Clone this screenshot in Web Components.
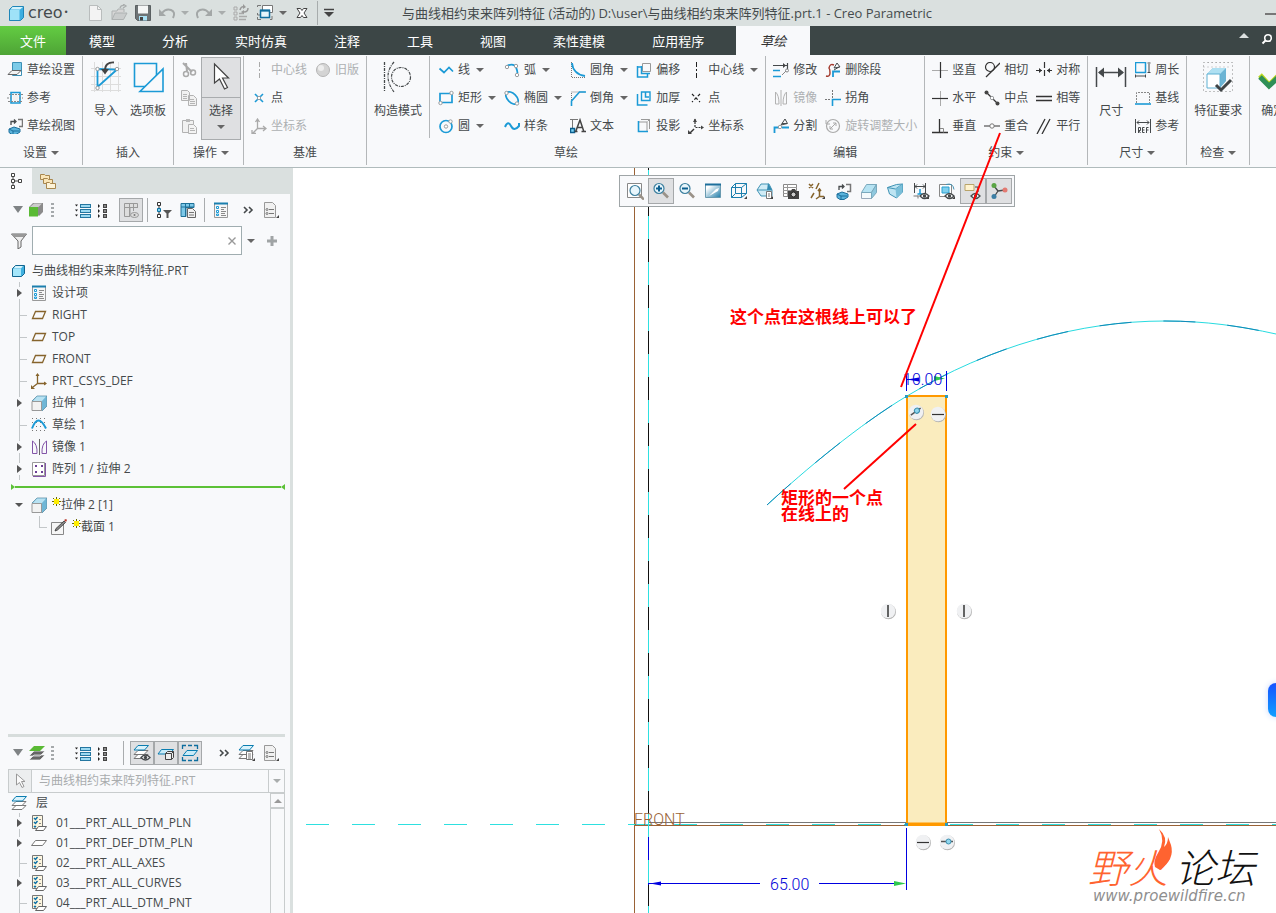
<!DOCTYPE html>
<html lang="zh-CN">
<head>
<meta charset="utf-8">
<title>Creo Parametric</title>
<style>
html, body { margin: 0; height: 100%; overflow: hidden; }
body { font: 12px/16px "Open Sans", "Noto Sans CJK SC", sans-serif; color: #45494b; background: #fff; }
</style>
</head>
<body>
<creo-app></creo-app>
<script>
const B = '#1b9ad6', K = '#45494b', G = '#9a9d9f', BR = '#86642c';
const node = (x, y, c = G) => `<circle cx="${x}" cy="${y}" r="1.7" fill="#fff" stroke="${c}"/>`;
const line = (d, c = K, w = 1, extra = '') => `<path d="${d}" fill="none" stroke="${c}" stroke-width="${w}" ${extra}/>`;
const eye = (x, y) => `<path d="M${x} ${y}q4.500-5 9 0q-4.500 5-9 0z" fill="#fff" stroke="${K}" stroke-width="1.300"/><circle cx="${x + 4.5}" cy="${y}" r="1.700" fill="${K}"/>`;
const corner = '<path d="M17 14v3h-3z" fill="#444"/>';
const rows = (x, w, c) => [2, 7, 12].map(y => `<rect x="${x + .5}" y="${y + .5}" width="${w}" height="3" fill="${c}" stroke="${w > 4 ? '#2476a0' : '#444'}"/>`).join('');
const stack = (c1, c2) => `<path d="M5 10.500h10l-4 4H1z" fill="#fff" stroke="#777"/><path d="M5 6.500h10l-4 4H1z" fill="#fff" stroke="#777"/><path d="M5 1.500h10.500l-4 4.500H1z" fill="${c1}" stroke="${c2}"/>`;
const viewCube = `<path d="M2 11l5-2 6 2v3l-4 2.500H5l-3-2z" fill="#5bb4dc" stroke="#1d6f9c"/><path d="M2 11l4 2h6M6 13v3" stroke="#1d6f9c" fill="none"/><path d="M4 7V3.500h4M7 1.500l2 2-2 2" fill="none" stroke="${K}" stroke-width="1.300"/><path d="M11 1.500h4.500v7H12" fill="none" stroke="#777" stroke-width="1.500"/>`;
const page = '<path d="M2.500 1.500h8l3 3v12h-11z" fill="#f1f1f1" stroke="#999"/><path d="M7 8.500h5M7 12.500h5" stroke="#777"/><circle cx="5" cy="8.500" r="1" fill="none" stroke="#777"/><circle cx="5" cy="12.500" r="1" fill="none" stroke="#777"/>';
const checkPage = '<path d="M1.500.500h10v13h-10z" fill="#fdf6df" stroke="#777"/><path d="M3 3l1.500 1.500L6.500 2M3 7l1.500 1.500L6.500 6M3 11l1 1 1-1" stroke="#0a6ea6" fill="none" stroke-width="1.400"/><path d="M8 4.500h2M8 8.500h2" stroke="#888"/><path d="M7.500 11.500h8l-3 4h-8z" fill="#fff" stroke="#666"/>';
const designPage = '<path d="M1.500 1.500h13v14h-13z" fill="#f6f6f6" stroke="#999"/><path d="M1 1.500h14" stroke="#1b7fae" stroke-width="2"/><path d="M3.500 4.500h2v2h-2zM3.500 8.500h2v2h-2zM3.500 12h2v1.500h-2z" fill="#fff" stroke="#1b9ad6"/><path d="M8 5.500h5M8 7.500h3M8 9.500h5M8 11.500h4M8 13.500h5" stroke="#8a8a8a"/>';
const extrude = '<path d="M1 6l5-5h10v10l-5 5z" fill="#6fb6d6" stroke="#5d8ea3" stroke-width=".800"/><path d="M2 6l4-4.500h9l-4 4.500z" fill="#b8e2f2"/><path d="M1 6.500h9.500v9H1z" fill="#f2f2f2" stroke="#999"/>';
const mag = '<circle cx="7" cy="6.500" r="5" fill="#e8f6fc" stroke="#3c7f9e" stroke-width="1.200"/><path d="M11 10.500l5 5" stroke="#9a9288" stroke-width="2.600"/>';

/* name: [box size, markup] */
const ICONS = {
  logo: [16, '<path d="M1.500 4.500l3-3h11v11l-3 3h-11z" fill="#3daee0" stroke="#1f86b8"/><path d="M2 5h9.500v10H2z" fill="#9fe2f8"/><path d="M2.500 4.500l2-2.500H15l-3 2.500z" fill="#d3f3fc"/>'],
  newf: [18, '<path d="M3.500 1.500h8l4 4v11h-12z" fill="#f3f3f3" stroke="#b9bdbd"/><path d="M11.500 1.500v4h4" fill="none" stroke="#b9bdbd"/>'],
  open: [18, '<path d="M2 15.500V7h5l1-2h6v3" fill="#d6d6d6" stroke="#aeb2b2"/><path d="M2 15.500L5 9h12l-3.500 6.500z" fill="#c9cccc" stroke="#aeb2b2"/><path d="M10 4q1-3 4-2.500M13 0l3 2-3 2" fill="none" stroke="#a9adad" stroke-width="1.300"/>'],
  save: [18, '<path d="M1.500 1.500h15v15h-13l-2-2z" fill="#6d7375" stroke="#5a6062"/><path d="M4 1.500h10v8H4z" fill="#f4f6f6"/><path d="M5 12h8v4.500H5z" fill="#a8e1f5"/><path d="M6 13h3v3.500H6z" fill="#444"/>'],
  undo: [18, '<path d="M4 9q4-5 9-3t2 8" fill="none" stroke="#a3a7a7" stroke-width="2"/><path d="M1 5v7h7z" fill="#a3a7a7"/>'],
  redo: [18, '<path d="M14 9Q10 4 5 6T3 14" fill="none" stroke="#a3a7a7" stroke-width="2"/><path d="M17 5v7h-7z" fill="#a3a7a7"/>'],
  regen: [18, '<path d="M2 3h3v3H2zM2 8h3v3H2zM2 13h3v3H2z" fill="none" stroke="#aaa"/><path d="M7 9.500h5M7 12.500h8M7 15.500h7" stroke="#aaa" stroke-width="1.500"/><path d="M8 6q1-4 4-3M16 4q0 4-4 4" fill="none" stroke="#999" stroke-width="1.500"/><path d="M11 0l3 3-3 2zM12 10l-3-2 3-2z" fill="#999"/>'],
  windows: [18, '<path d="M1.500 3V1.500H5M1.500 9v2H4M1.500 13v2.500H5M14 15.500h2V12" stroke="#777" fill="none"/><path d="M6.500 1.500h10v7h-10z" fill="#fff" stroke="#777"/><path d="M4.500 6.500h9v7h-9z" fill="#e4f5fb" stroke="#0e6e9f" stroke-width="1.500"/><path d="M4 6.500h10" stroke="#0e6e9f" stroke-width="2"/>'],
  closew: [18, '<path d="M4 4.500h3.500l1.500 2 1.500-2H14L11 9l3 4.500h-3.500L9 11.500l-1.500 2H4L7 9z" fill="#fff" stroke="#444"/>'],
  setup: [16, '<path d="M5.500.500h9v13h-9z" fill="#fff" stroke="#3b8fb5"/><path d="M6 1h8v7H6z" fill="#7ccbe8"/><path d="M1 12.500l4-4h9l-4 4z" fill="#f2f2f2" stroke="#666"/>'],
  ref: [16, line('M4 2.500h9v10.500H4z', B, 1.6) + line('M0 8h4M12 8h4M2 4.500h14M1 11.500h14', '#888', 1, 'stroke-dasharray="2 1"') + '<path d="M6 5h5v6H6z" fill="#f2f2f2"/>'],
  skview: [16, viewCube],
  imp: [32, '<path d="M4.500 1v30M12.500 1v30M20.500 1v30M28.500 1v30M1 7.500h30M1 15.500h30M1 23.500h30M1 29.500h30" stroke="#ddd"/>' + line('M7.500 8v18L27 8.500z', B, 1.8) + node(7.5, 8) + node(27, 8) + node(7.5, 27) + '<path d="M24 1.500q-9-.500-9 8" fill="none" stroke="#444" stroke-width="1.800"/><path d="M11 8h8l-4 5.500z" fill="#444"/>'],
  palette: [32, line('M2.500 2.500h22v23h-22z', B, 1.6) + '<path d="M31 8v22.500H8z" fill="#f8f9fb" stroke="#1b9ad6" stroke-width="1.600"/>'],
  cut: [16, line('M2 1l9 9M5 1l1 8', '#aaa', 2) + '<circle cx="5" cy="12" r="2.500" fill="none" stroke="#aaa" stroke-width="1.500"/><circle cx="12" cy="10.500" r="2.500" fill="none" stroke="#aaa" stroke-width="1.500"/>'],
  copy: [16, '<path d="M.500.500h6l2 2v8h-8zM7.500 5.500h5l3 3v7h-8z" fill="#f1f1f1" stroke="#b2b2b2"/><path d="M2 4.500h4M2 6.500h4M2 8.500h4M9 9.500h4M9 11.500h5M9 13.500h5" stroke="#b5b5b5"/>'],
  paste: [16, '<path d="M1.500 2.500h11v12h-11z" fill="#f1f1f1" stroke="#b2b2b2"/><path d="M5 1h4v3H5z" fill="#b9b9b9"/><path d="M7.500 6.500h5l3 3v6h-8z" fill="#f4f4f4" stroke="#b2b2b2"/><path d="M9 10.500h4M9 12.500h5" stroke="#b5b5b5"/>'],
  cursor: [32, '<path d="M9.500 2v19l5-4 5 10 3-1.500-5-9.500h6z" fill="#fff" stroke="#444" stroke-width="1.200"/>'],
  dashg: [16, line('M8.500 0v16', '#aaa', 1, 'stroke-dasharray="5 2 2 2"')],
  sphere: [16, '<circle cx="8" cy="8" r="6.500" fill="#d4d4d4" stroke="#b5b5b5"/><circle cx="6" cy="6" r="3" fill="#eee"/>'],
  ptblue: [16, line('M4 4l8 8M12 4l-8 8', B, 1.6) + node(8, 8)],
  csysg: [16, line('M6.500 2v8.500H15M6.500 10.500L2 15M4.500 4l2-3 2 3M12 8l3 2.500-3 2.500M1 12v3.500h4', '#aaa', 1.3)],
  construct: [32, line('M2.500 1v30', K, 1.3, 'stroke-dasharray="3 1 1 1"') + line('M12 1Q0 15 12 31', K, 1.2, 'stroke-dasharray="3 1 1 1"') + '<circle cx="19" cy="16" r="9.500" fill="none" stroke="#45494b" stroke-width="1.200" stroke-dasharray="3 1 1 1"/>'],
  line: [16, line('M1.500 6.500L6 10.500l5-5 4 4', B, 1.7)],
  rect: [16, line('M2 3.500h12v9H2z', B, 1.7) + node(2.5, 13) + node(13.500, 3)],
  circle: [16, '<circle cx="8" cy="8.500" r="6" fill="none" stroke="#1b9ad6" stroke-width="1.700"/>' + node(8, 8.5) + node(12.5, 3.5)],
  arc: [16, line('M3 4q9-5 10.500 7', B, 1.8) + node(3, 5) + node(12, 4) + node(13, 13)],
  ellipse: [16, '<ellipse cx="8" cy="8" rx="7.500" ry="4.500" transform="rotate(45 8 8)" fill="none" stroke="#1b9ad6" stroke-width="1.700"/>' + node(2.5, 3) + node(13, 13.500)],
  spline: [16, line('M1 9q3-7 6-1t8 0V5', B, 2)],
  fillet: [16, line('M1.500 0v15.500H16', '#777', 1, 'stroke-dasharray="1 1"') + line('M2 1q1 11 13 13', B, 1.8)],
  chamfer: [16, line('M1.500 16V2h14', '#777', 1, 'stroke-dasharray="1 1"') + line('M1.500 16v-5l8-9H16', B, 1.6)],
  text: [16, line('M0 1.500h8M2.500 2v9', '#777') + '<path d="M.500 10.500h4v4h-4z" fill="#7fd4f5" stroke="#0b5f8f" stroke-width="1.500"/><path d="M5.500 14L10 2l4 12M7.500 9.500h5M4.500 13.500h3M11.500 13.500h4.500" fill="none" stroke="#444" stroke-width="1.500"/>'],
  offset: [16, '<path d="M6.500 1.500h8v8h-8z" fill="none" stroke="#999"/>' + line('M5.500 4v7.500H14M1.500 4v11h10v-3M1.500 5h4', B, 1.500)],
  thicken: [16, line('M5.500 2v8.500H14V2z', B, 1.4) + line('M9.500 2v5H13M1.500 4v11h10', B, 1.5)],
  project: [16, '<path d="M5 1.500h8.500v9.500M3 4h8v9" fill="none" stroke="#999"/>' + line('M13.500 1.500l-2 2', '#999') + line('M2.500 3v10.500H12', B, 1.6)],
  dashk: [16, line('M8.500 0v16', '#222', 1, 'stroke-dasharray="5 2 2 2"')],
  ptk: [16, line('M4 4l8 8M12 4l-8 8', '#222', 1.2, 'stroke-dasharray="3 2"')],
  csysk: [16, line('M7 1v8.500h8', '#333', 1.2, 'stroke-dasharray="2 1"') + line('M6 11l-4 4', '#333', 1.5) + '<path d="M5 4l2-3.500L9 4zM13 7.500l3 2-3 2zM0 12v4h4z" fill="#444"/>'],
  modify: [16, line('M0 3.500h15M14.500 1v6', K, 1.200) + '<path d="M10 1l3 2.500L10 6z" fill="#444"/>' + line('M0 8.500h7M0 14.500h8', B, 1.6) + line('M9 13l4-4', '#888') + '<circle cx="14" cy="8.500" r="1.500" fill="none" stroke="#888"/>'],
  mirrorg: [16, line('M2.500 2v12H6q0-9-3.500-12zM13.500 2v12H10q0-9 3.500-12zM8 0v16', '#b2b2b2')],
  split: [16, line('M1.500 15V9.500h5M9 9.500h7', B, 1.8) + line('M8 7l4-6 2.500 4.500zM14 5.500h-5', K) + node(7, 9)],
  delseg: [16, line('M1 14q4 1 4-3t-1-5q1-5 5-3', '#a33a2e', 1.4) + line('M8 15v-5.500h7', B, 1.8) + line('M9 6l3-5 3 4zM9 8l5-3', K)],
  cornerc: [16, line('M7.500 0v9M0 9.500h6', '#777', 1, 'stroke-dasharray="2 1"') + line('M7.500 16v-6.500H16', B, 1.6)],
  rotate: [16, '<circle cx="8" cy="8" r="6.500" fill="none" stroke="#aaa" stroke-width="1.200"/>' + line('M5 11l6-6M8 5h3v3M5 8v3h3M1 2v4h4', '#aaa')],
  vert: [16, line('M0 8.500h16', '#aaa', 1) + line('M8.500 0v16', '#333', 1.200)],
  horiz: [16, line('M8.500 1v15', '#aaa', 1) + line('M0 8.500h16', '#333', 1.200)],
  perp: [16, line('M0 14.500h16M7.500 1v13', '#333', 1.300) + line('M8 10.500h3.500v4', '#888')],
  tangent: [16, '<circle cx="6" cy="5" r="4.500" fill="none" stroke="#333" stroke-width="1.200"/>' + line('M2 15L16 1', '#333', 1.3)],
  mid: [16, line('M2 2l12 12', '#333', 1.200) + '<circle cx="2.500" cy="2.500" r="2" fill="#444"/><circle cx="13.500" cy="13.500" r="2" fill="#444"/>' + node(8, 8)],
  coin: [16, line('M0 8h16', '#333', 1) + '<circle cx="8" cy="8" r="2.200" fill="#fff" stroke="#777"/>'],
  sym: [16, line('M8.500 0v16', '#333', 1.200, 'stroke-dasharray="6 2"') + line('M0 8.500h6M11 8.500h5', '#333') + '<path d="M3 6l3 2.500L3 11zM14 6l-3 2.500 3 2.500z" fill="#333"/>'],
  equal: [16, line('M0 6.500h16M0 10.500h16', '#333', 1.300)],
  para: [16, line('M1 16L9 1M6 16l8-15', '#333', 1.300)],
  dim: [32, line('M1.500 6v20M30.500 6v20M4 11.500h24', K, 1.5) + '<path d="M3 11.500l6-5v10zM29 11.500l-6-5v10z" fill="#45494b"/>'],
  perim: [16, line('M.500.500h10v10H.500z', B, 1.500) + line('M12.500 1h3M12.500 10.500h3M14 2v8M.500 12.500v3M10.500 12.500v3M1 14h9', K)],
  base: [16, line('M1.500 13V2.500h13V13', '#888', 1, 'stroke-dasharray="2 1"') + line('M0 14h16', B, 1.6)],
  refdim: [16, line('M.500 1v14M15.500 1v14M2 4.500h12M4 2.500l-2 2 2 2M12 2.500l2 2-2 2', K) + line('M3.500 15V9.500h2v3h-2l2 2.500M9.500 9.500H7.500v5h2M7.500 12h2M13.500 9.500h-2V15M11.500 12h2', K)],
  feature: [32, '<path d="M1.500 1.500h29v29h-29z" fill="none" stroke="#888" stroke-dasharray="1 3"/><path d="M6 1.500h22M1.500 6h28" stroke="#aaa" stroke-dasharray="1 3"/><path d="M5 13l6-6h13v13l-6 7z" fill="#6cb4d4"/><path d="M5 13l6-6h13l-6 6z" fill="#aee0f2"/><path d="M5 13h13v14H5z" fill="#fff" stroke="#5fb0d2"/><path d="M14 24l5 5 10-10" fill="none" stroke="#3f4446" stroke-width="3"/>'],
  ok: [32, '<path d="M3 14l9 10L27 9" fill="none" stroke="#b9d820" stroke-width="5"/><path d="M3 16l9 9L27 11" fill="none" stroke="#2f8f57" stroke-width="5"/>'],
  nodes: [16, '<path d="M3.500.500h3v3h-3zM3.500 6.500h3v3h-3zM3.500 12.500h3v3h-3zM10.500 6.500h3v3h-3z" fill="#fff" stroke="#444"/><path d="M5 4v2M5 10v2M7 8h3" stroke="#444"/>'],
  folders: [16, '<path d="M.500 1.500h4l1 1h4v4h-9z" fill="#fbe6b8" stroke="#a8874e"/><path d="M3.500 5.500h4l1 1h4v4h-9z" fill="#fbe6b8" stroke="#a8874e"/><path d="M6.500 9.500h3l1 1h5v5h-9z" fill="#fdf3d8" stroke="#a8874e"/>'],
  greencube: [16, '<path d="M0 5l4-4h10v9l-4 4z" fill="#8b8b8b"/><path d="M1 5l4-3.500h8L9.500 5z" fill="#ccc"/><path d="M0 5h9v9.500H0z" fill="#5aba35"/>'],
  list: [16, rows(5, 10, '#9bd9f1') + '<path d="M0 2.500h3l-1.500 2zM0 7.500h3l-1.500 2zM0 12.500h3l-1.500 2z" fill="#222"/>'],
  list2: [16, rows(6, 3, '#888') + '<path d="M1 2v4l2-2zM1 7v4l2-2zM1 12v4l2-2z" fill="#222"/>'],
  table: [16, '<path d="M1.500 1.500h13v4H7v9H1.500z" fill="#ddd" stroke="#999"/><path d="M1 5.500h14M6.500 1v14M10.500 1v8" stroke="#999"/><ellipse cx="11.500" cy="13" rx="4" ry="2.500" fill="#ddd" stroke="#999"/><circle cx="11.500" cy="13" r="1" fill="#777"/>'],
  nodefilter: [16, '<path d="M1.500.500h3v3h-3zM1.500 12.500h3v3h-3z" fill="#fff" stroke="#333"/><path d="M1.500 6.500h3v3h-3z" fill="#7fd4f5" stroke="#0b6f9f"/><path d="M3 4v2M3 10v2" stroke="#333"/><path d="M7 8h9l-3.500 3.500V16h-2v-4.500z" fill="#555"/>'],
  cols: [16, '<path d="M1 1.500h13v4H6v9H1z" fill="#7cc8e8" stroke="#1f7198"/><path d="M5.500 1v13M9.500 1v4M1 5h13" stroke="#1f7198"/><path d="M7.500 6.500h5l3 3v6h-8z" fill="#f1f1f1" stroke="#666"/><path d="M9 10.500h5M9 13h5" stroke="#777"/>'],
  design: [16, designPage],
  chev: [16, line('M4 5l3 3-3 3M9 5l3 3-3 3', K, 1.6)],
  page: [18, page + corner],
  funnel: [16, '<path d="M.500 1h15L10 8v6l-3 2V8z" fill="#eee" stroke="#666"/><path d="M.500 1h15L13 4H3z" fill="#999"/>'],
  x: [12, line('M2.500 2.500l7 7M9.500 2.500l-7 7', '#999', 1.4)],
  plus: [12, '<path d="M4.500 1h3v3.500H11v3H7.500V11h-3V7.500H1v-3h3.500z" fill="#a0a4a5"/>'],
  part: [16, '<path d="M1.500 5.500l3-3h9v8l-3 3h-9z" fill="#3fb0df" stroke="#12658f"/><path d="M2 6h8v7H2z" fill="#a5e6fa"/><path d="M2.500 5.500L4.500 3H12l-2 2.500z" fill="#d5f4fd"/>'],
  plane: [16, line('M4.500 4.500h10l-3 7h-10z', BR, 1.3)],
  csys: [16, line('M6.500 1v9.500h8.500M6.500 10.500L2 14', BR, 1.3) + '<path d="M4.500 3l2-3 2 3zM13 8.500l3 2-3 2zM0 12v4h4z" fill="#86642c"/>'],
  extrude: [16, extrude],
  sketch: [16, '<path d="M1 1.500h15M1 5.500h15M1 9.500h15M1 13.500h15" stroke="#777" stroke-dasharray="1 3"/>' + line('M1 11.500q6-16 14 0', B, 2)],
  mirror: [16, line('M1.500 2v12.500H6Q6.500 5 1.500 2zM15.500 2v12.500H11Q10.500 5 15.500 2z', '#8355a8', 1) + line('M8.500 0v16', '#666')],
  pattern: [16, '<path d="M1.500 1.500h12v13h-12z" fill="#fff" stroke="#999"/><path d="M14.500 2v13.500H2" fill="none" stroke="#8355a8"/><path d="M4 4h2v2H4zM10 4h2v2h-2zM4 10h2v2H4zM10 10h2v2h-2z" fill="#6d3f96"/>'],
  section: [16, '<path d="M.500 3.500h12v12H.500z" fill="#f6f6f6" stroke="#888"/><path d="M4 12l1-2.500 8-7.500 1.500 1.500L6.500 11z" fill="#888" stroke="#333" stroke-width=".800"/><path d="M13 1l2-1 1 1-1 2z" fill="#b73a2c"/>'],
  star: [9, '<path d="M4.500 0v9M0 4.500h9M1 1l7 7M8 1l-7 7" stroke="#6b6b00"/><path d="M2 2h5v5H2z" fill="#ffee00"/>'],
  glayers: [16, '<path d="M5 10h11l-5 5H0zM5 6h11l-5 5H0z" fill="#666" stroke="#f8f9fb" stroke-width=".700"/><path d="M5 1h11l-5 5H0z" fill="#5aba35"/>'],
  layers: [16, stack('#d9f2fb', '#0b7db0')],
  layereye: [18, stack('#d9f2fb', '#0b7db0') + eye(8, 13.500)],
  layerbox: [18, '<path d="M4.500 5.500h12l-4 4.500H1z" fill="#c9ebf8" stroke="#0b7db0"/><path d="M8.500 9.500l2-2h6v6l-2 2h-6z" fill="#eee" stroke="#444"/><path d="M8.500 9.500h6v6M14.500 9.500l2-2" fill="none" stroke="#444"/>'],
  layersel: [18, line('M1.500 5V1.500H5M13 1.500h3.500V5M16.500 13v3.500H13M5 16.500H1.500V13M7 1.500h4M7 16.500h4', '#0e6e9f', 1.300) + '<path d="M6 6.500h10.500l-4 5H2z" fill="#c9ebf8" stroke="#0b7db0"/>'],
  layerpage: [18, stack('#d9f2fb', '#0b7db0') + '<path d="M8.500 7.500h6v8h-6z" fill="#fff" stroke="#777"/><path d="M10 10h3M10 12h3M10 14h3" stroke="#777"/>' + corner],
  check: [16, checkPage],
  flat: [16, '<path d="M4.500 5.500h11l-4 5H.500z" fill="#fff" stroke="#777"/>'],
  arrowg: [16, '<path d="M4.500 1v11l3-2.500 2.500 5 2-1-2.500-5h3.500z" fill="#fafafa" stroke="#999"/>'],
  vfit: [18, '<path d="M1.500 1.500h14v14h-14z" fill="#fff" stroke="#888"/><g transform="translate(2 2)">' + mag + '</g>'],
  vin: [18, mag + line('M4 6.500h6M7 3.500v6', '#0b5f8f', 2)],
  vout: [18, mag + line('M4 6.500h6', '#0b5f8f', 2)],
  repaint: [18, '<defs><linearGradient id="g" x1="0" y1="0" x2="1" y2="1"><stop offset="0.200" stop-color="#fff"/><stop offset="1" stop-color="#1d7ba8"/></linearGradient></defs><path d="M1.500 2.500h15v13h-15z" fill="url(#g)" stroke="#6a9ab0"/><path d="M1 2.500h16" stroke="#1d6f9c" stroke-width="2"/><path d="M5 14l7-7 3-1-1 3z" fill="#fff"/>'],
  box: [18, line('M1.500 5.500h10v10h-10zM5.500 1.500h11v10h-11zM1.500 5.500l4-4M11.500 5.500l5-4M11.500 15.500l5-4M1.500 15.500l4-4', '#1b7fae', 1) + corner],
  saved: [18, '<path d="M1 8l4-6h8l3 6v6H5z" fill="#d0ecf6" stroke="#4193b5"/><path d="M12 1l4 7h-5z" fill="#3189b0"/><path d="M1 8h15" stroke="#4193b5"/><path d="M10.500 9.500h5v7h-5z" fill="#fff" stroke="#777"/><path d="M12 12h2M12 14h2" stroke="#777"/>' + corner],
  camera: [18, '<path d="M1.500 2.500h13v12h-13z" fill="#fff" stroke="#888"/><path d="M1 5.500h14M1 8.500h14M1 11.500h14M5.500 2v12" stroke="#999"/><path d="M6 9h3l1-2h3l1 2h3v8H6z" fill="#444"/><circle cx="11.500" cy="12.500" r="2.500" fill="#ccc" stroke="#222"/>'],
  datum: [18, line('M1 2l4 4M5 2L1 6M11 1L8 7M6 11l-3 5M11.500 7v7.500H16M11.500 14.500L8 17M10 9l1.500-2L13 9', BR, 1.500) + corner],
  vview: [18, '<g transform="translate(1 1)">' + viewCube + '</g>'],
  sect: [18, '<path d="M1.500 10.500h10v6h-10z" fill="#f4fafc" stroke="#9ab"/><path d="M1.500 10.500l5-8h10l-5 8z" fill="#b6e3f3" stroke="#7aa9bd"/><path d="M16.500 2.500v8l-5 6v-6z" fill="#8ec8de" stroke="#7aa9bd"/>'],
  persp: [18, '<path d="M1.500 5.500l9-3 6-.500v8l-6 6-7-4z" fill="#bde4f2" stroke="#4193b5"/><path d="M1.500 5.500l8 1.500 7-5" fill="none" stroke="#4193b5"/><path d="M9.500 7l7-5v8l-6 6z" fill="#7abfd9"/>'],
  anno: [18, line('M2.500 1v10M13.500 1v10M3 4.500h10M5 2.500l-2 2 2 2M11 2.500l2 2-2 2', K) + line('M8 7v5M5.500 12h5', B, 1.500) + line('M1.500 14h5M6 13.500v3', '#777') + eye(8, 14) + corner],
  dynv: [18, '<path d="M1.500 2.500h12v12h-12z" fill="#fff" stroke="#888"/><path d="M4 5h7v6H4z" fill="#7fd0ee" stroke="#2a9fcf"/>' + line('M8 2.500q7-2 8 5', '#4193b5') + eye(7, 14) + corner],
  note: [18, '<path d="M1 2.500h9v6H1z" fill="#fff3cf" stroke="#b9a46a"/>' + line('M11 5h3v5', K) + eye(7, 14)],
  spin: [18, line('M8 9L4 4M8 9l7-1M8 9l-4 6', K, 1.300) + '<circle cx="4" cy="3.500" r="2.500" fill="#5aa545"/><circle cx="15" cy="8" r="2.500" fill="#e37a72"/><circle cx="4" cy="14.500" r="2.500" fill="#3c7fa5"/>'],
  search: [12, '<circle cx="7" cy="5" r="3.300" fill="none" stroke="#fff" stroke-width="1.600"/><path d="M4.500 7.500L1.500 10.500" stroke="#fff" stroke-width="2"/>'],
  caret: [8, '<path d="M0 2h8L4 6z" fill="#666"/>'],
  caretg: [8, '<path d="M0 2h8L4 6z" fill="#a9adad"/>'],
  caretup: [12, '<path d="M1 5h10L6 0z" fill="#dce0e0"/>'],
  tri: [10, '<path d="M0 1h10L5 8z" fill="#7f8385"/>'],
  trilined: [10, '<path d="M0 1.500h10" stroke="#444" stroke-width="1.500"/><path d="M0 4h10L5 9z" fill="#444"/>'],
  min: [12, '<path d="M1 7h11" stroke="#777" stroke-width="2"/>']
};

/* Registers an element whose shadow root is cloned from a template. */
function define(tag, css, html, setup) {
  const t = document.createElement('template');
  t.innerHTML = `<style>*{box-sizing:border-box}${css}</style>${html}`;
  customElements.define(tag, class extends HTMLElement {
    connectedCallback() {
      if (this.shadowRoot) return;
      const root = this.attachShadow({ mode: 'open' });
      root.append(t.content.cloneNode(true));
      if (setup) setup(this, root);
    }
  });
}
const I = n => `<ui-icon name="${n}"></ui-icon>`;
const BTN = 'button{font:inherit;color:inherit;background:none;border:0;padding:0;margin:0;cursor:default}';

define('ui-icon', ':host{display:block;flex:none}svg{display:block}', '', (el, root) => {
  const [s, m] = ICONS[el.getAttribute('name')];
  root.innerHTML += `<svg width="${s}" height="${s}" viewBox="0 0 ${s} ${s}" aria-hidden="true">${m}</svg>`;
});

define('tool-button', `:host{display:block;flex:none}${BTN}
  button{display:grid;place-items:center;min-width:16px;height:24px}
  :host([box]) button{width:26px;height:26px}
  :host([on]) button{width:24px;background:#dfe0e2;border:1px solid #a5a8aa}
  :host([box][on]) button{width:26px}`, '', (el, root) => {
  root.innerHTML += `<button type="button" aria-label="${el.getAttribute('icon')}">${I(el.getAttribute('icon'))}</button>`;
});

define('cmd-button', `:host{display:block}${BTN}
  button{display:flex;align-items:center;height:28px;white-space:nowrap}
  .t{margin-left:4px}.c{margin-left:6px}
  :host([off]) button{color:#adb0b2}`, '', (el, root) => {
  root.innerHTML += `<button type="button">${I(el.getAttribute('icon'))}<span class="t"><slot></slot></span>${el.hasAttribute('menu') ? `<span class="c">${I('caret')}</span>` : ''}</button>`;
});

define('big-button', `:host{display:block}${BTN}
  button{display:flex;flex-direction:column;align-items:center;min-width:32px;height:84px;padding-top:5px;gap:10px;white-space:nowrap}
  :host([on]) button{width:40px;height:83px;margin-top:1px;padding-top:4px;gap:9px;border:1px solid #a9acae;background:linear-gradient(#dfe0e2 39px,#a9acae 39px 40px,#dfe0e2 40px)}
  .c{margin-top:-5px}`, '', (el, root) => {
  root.innerHTML += `<button type="button">${I(el.getAttribute('icon'))}<span><slot></slot></span>${el.hasAttribute('menu') ? `<span class="c">${I('caret')}</span>` : ''}</button>`;
});

define('ribbon-group', `:host{display:flex;flex:none;flex-direction:column;height:109px;padding:0 7px;border-right:1px solid #b4b7b9}
  .body{display:flex;gap:8px;height:84px}
  .cap{display:flex;justify-content:center;align-items:center;gap:4px;height:30px}
  :host([tight]) .body{gap:0}:host([tight]){padding-right:2px}
  :host(:last-of-type){border-right:0}
  ::slotted(div){display:flex;flex-direction:column}
  ::slotted(hr){width:1px;height:82px;margin:0 0 0 -1px;border:0;background:#b4b7b9}`,
  '', (el, root) => {
  root.innerHTML += `<div class="body"><slot></slot></div><div class="cap"><span>${el.getAttribute('label') || ''}</span>${el.hasAttribute('menu') ? I('caret') : ''}</div>`;
});

define('title-bar', `:host{display:flex;align-items:center;height:26px;padding-left:8px;background:#dae0df;color:#454b4d;overflow:hidden}
  .brand{display:flex;align-items:center;gap:4px;width:78px;font:16px/20px "DejaVu Sans",sans-serif}
  .brand sup{font-size:8px;line-height:8px;margin-left:-3px}
  .q{display:flex;align-items:center;gap:6px}
  .q span{display:flex;align-items:center;gap:5px}
  .sep{width:1px;height:24px;background:#a7acac}
  h1{font-size:13px;line-height:20px;font-weight:400;margin:0 0 0 68px;white-space:nowrap;flex:1}`,
  `<div class="brand">${I('logo')}<span>creo</span><sup>•</sup></div>
  <div class="q">${I('newf')}${I('open')}${I('save')}<span>${I('undo')}${I('caretg')}</span><span>${I('redo')}${I('caretg')}</span>${I('regen')}<span>${I('windows')}${I('caret')}</span>${I('closew')}<i class="sep"></i>${I('trilined')}</div>
  <h1>与曲线相约束来阵列特征 (活动的) D:\\user\\与曲线相约束来阵列特征.prt.1 - Creo Parametric</h1>${I('min')}`);

define('menu-bar', `:host{display:flex;height:29px;background:#3c4646;color:#fff;font-size:13px}${BTN}
  button{padding:0 24px 0 23px;white-space:nowrap}
  .file{padding:0 20px;background:linear-gradient(#63cc42,#4ea436)}
  .cur{padding:0 24px;margin-left:8px;background:#f8f9fb;color:#333;font-style:italic}
  .end{margin-left:auto;display:flex;align-items:center;gap:11px;padding:0 3px 4px 0}`,
  `<button class="file">文件</button>${'模型 分析 实时仿真 注释 工具 视图 柔性建模 应用程序'.split(' ').map(t => `<button>${t}</button>`).join('')}<button class="cur">草绘</button><div class="end">${I('caretup')}${I('search')}</div>`);

const cmds = s => '<div>' + s.split(' ').map(c => {
  const [i, t = '', f = ''] = c.split(':');
  return `<cmd-button icon="${i}" ${f}>${t}</cmd-button>`;
}).join('') + '</div>';

define('creo-ribbon', `:host{display:flex;height:113px;padding-top:1px;background:#f8f9fb;border-bottom:1px solid #b0bbbc;overflow:hidden}`,
  `<ribbon-group label="设置" menu>${cmds('setup:草绘设置 ref:参考 skview:草绘视图')}</ribbon-group>
  <ribbon-group label="插入"><big-button icon="imp">导入</big-button><big-button icon="palette">选项板</big-button></ribbon-group>
  <ribbon-group label="操作" menu tight>${cmds('cut copy paste')}<big-button icon="cursor" on menu>选择</big-button></ribbon-group>
  <ribbon-group label="基准">${cmds('dashg:中心线:off ptblue:点 csysg:坐标系:off')}${cmds('sphere:旧版:off')}</ribbon-group>
  <ribbon-group label="草绘"><big-button icon="construct">构造模式</big-button><hr>${cmds('line:线:menu rect:矩形:menu circle:圆:menu')}${cmds('arc:弧:menu ellipse:椭圆:menu spline:样条')}${cmds('fillet:圆角:menu chamfer:倒角:menu text:文本')}${cmds('offset:偏移 thicken:加厚 project:投影')}${cmds('dashk:中心线:menu ptk:点 csysk:坐标系')}</ribbon-group>
  <ribbon-group label="编辑">${cmds('modify:修改 mirrorg:镜像:off split:分割')}${cmds('delseg:删除段 cornerc:拐角 rotate:旋转调整大小:off')}</ribbon-group>
  <ribbon-group label="约束" menu>${cmds('vert:竖直 horiz:水平 perp:垂直')}${cmds('tangent:相切 mid:中点 coin:重合')}${cmds('sym:对称 equal:相等 para:平行')}</ribbon-group>
  <ribbon-group label="尺寸" menu><big-button icon="dim">尺寸</big-button>${cmds('perim:周长 base:基线 refdim:参考')}</ribbon-group>
  <ribbon-group label="检查" menu><big-button icon="feature">特征要求</big-button></ribbon-group>
  <ribbon-group><big-button icon="ok">确定</big-button></ribbon-group>`);

define('tree-item', `:host{display:flex;align-items:center;height:var(--row,22px);padding-left:11px;white-space:nowrap}
  .g{width:16px;height:100%;margin-right:4px;display:grid;place-items:center;background:linear-gradient(#c3c7c9,#c3c7c9) 8px 0/1px 100% no-repeat}
  .g.leaf{background:linear-gradient(#c3c7c9,#c3c7c9) 8px 0/1px 100% no-repeat,linear-gradient(#c3c7c9,#c3c7c9) 8px 50%/8px 1px no-repeat}
  .g svg{background:#f8f9fb}
  .g.down{background:none}
  .g.child{margin-left:20px;background:linear-gradient(#c3c7c9,#c3c7c9) 8px 0/1px 50% no-repeat,linear-gradient(#c3c7c9,#c3c7c9) 8px 50%/8px 1px no-repeat}
  .t{display:flex;align-items:center;margin-left:var(--text-gap,5px)}
  .t ui-icon{align-self:flex-start}`, '', (el, root) => {
  const a = el.getAttribute('arrow') || '';
  const arrow = { right: '<svg width="8" height="12"><path d="M2 2l5 4-5 4z" fill="#555"/></svg>', down: '<svg width="8" height="12"><path d="M0 4h8L4 8z" fill="#555"/></svg>' }[a] || '';
  root.innerHTML += (a ? `<span class="g ${a}">${arrow}</span>` : '') + I(el.getAttribute('icon')) + `<span class="t">${el.hasAttribute('star') ? I('star') : ''}<slot></slot></span>`;
});

const tbCss = `.tb{display:flex;align-items:center;height:32px;padding:0 10px 0 13px}
  .tb>div{display:flex;align-items:center;gap:6px}
  .b{margin-left:21px}.c{margin-left:4px}.e{margin-left:10px}.tb>.c{gap:8px}.tb>.d{margin-left:auto;gap:6px}
  .on{display:flex}.sep{width:1px;height:24px;background:#a9acae}
  .grip{width:3px;height:14px;background:repeating-linear-gradient(#a5a9ab 0 2px,transparent 2px 4px)}`;
const T = (n, a = '') => `<tool-button icon="${n}" ${a}></tool-button>`;

define('model-tree', `:host{display:block;flex:1;min-height:0}${BTN}${tbCss}
  .tabs{display:flex;height:26px;background:#dae0df}
  .tabs button{width:32px;display:grid;place-items:center}
  .tabs .cur{background:#f8f9fb}
  .search{display:flex;align-items:center;padding:0 11px 5px;gap:5px}
  .box{display:flex;align-items:center;width:210px;height:29px;border:1px solid #a0adb0;background:#fff;padding:0 3px}
  input{flex:1;min-width:0;border:0;outline:0;background:none;font:inherit}
  .search .m{display:flex;align-items:center;gap:11px}
  .ins{height:14px;margin:0 5px 0 11px;display:flex;align-items:center}
  .ins::before,.ins::after{content:"";border:3px solid transparent;border-left:4px solid #5cc136;border-right:0}
  .ins::after{border-right:4px solid #5cc136;border-left:0}
  .ins i{flex:1;height:2px;background:#5cc136}`,
  `<div class="tabs"><button class="cur" aria-label="模型树">${I('nodes')}</button><button aria-label="文件夹">${I('folders')}</button></div>
  <div class="tb"><div>${I('tri')}${T('greencube')}<i class="grip"></i></div><div class="b">${T('list')}${T('list2')}${T('table', 'on')}</div><div class="c"><i class="sep"></i>${T('nodefilter')}${T('cols')}<i class="sep"></i>${T('design')}</div><div class="d">${T('chev')}${T('page')}</div></div>
  <div class="search">${I('funnel')}<label class="box"><input type="text" aria-label="搜索">${I('x')}</label><div class="m">${I('caret')}${I('plus')}</div></div>
  <tree-item icon="part">与曲线相约束来阵列特征.PRT</tree-item>
  <tree-item icon="design" arrow="right">设计项</tree-item>
  <tree-item icon="plane" arrow="leaf">RIGHT</tree-item>
  <tree-item icon="plane" arrow="leaf">TOP</tree-item>
  <tree-item icon="plane" arrow="leaf">FRONT</tree-item>
  <tree-item icon="csys" arrow="leaf">PRT_CSYS_DEF</tree-item>
  <tree-item icon="extrude" arrow="right">拉伸 1</tree-item>
  <tree-item icon="sketch" arrow="leaf">草绘 1</tree-item>
  <tree-item icon="mirror" arrow="right">镜像 1</tree-item>
  <tree-item icon="pattern" arrow="right">阵列 1 / 拉伸 2</tree-item>
  <div class="ins"><i></i></div>
  <tree-item icon="extrude" arrow="down" star>拉伸 2 [1]</tree-item>
  <tree-item icon="section" arrow="child" star>截面 1</tree-item>`);

define('layer-tree', `:host{display:block;flex:none}${BTN}${tbCss}
  .rule{height:3px;margin:0 5px 0 8px;background:#d7dddc}
  .pick{display:flex;height:24px;margin:0 5px 0 8px;border:1px solid #c8cccd}
  .pick>span{width:23px;display:grid;place-items:center;background:#eceeef;border-right:1px solid #c8cccd}
  .pick>span:last-child{width:16px;background:none;border:0;border-left:1px solid #c8cccd}
  select{appearance:none;flex:1;border:0;background:#f8f9fb;color:#a9acae;font:inherit;padding:0 7px;opacity:1}
  .list{display:flex;--row:20px;--text-gap:9px}
  .rows{flex:1;min-width:0}
  .bar{width:15px;margin-right:5px;border:1px solid #c8cccd;border-bottom:0;display:flex;flex-direction:column}
  .bar i{height:15px;display:grid;place-items:center;border-bottom:2px solid #c8cccd}`,
  `<div class="rule"></div>
  <div class="tb"><div>${I('tri')}${T('glayers')}<i class="grip"></i></div><div class="b">${T('list')}${T('list2')}</div><div class="e"><i class="sep"></i><span class="on">${T('layereye', 'on')}${T('layerbox', 'on')}${T('layersel', 'on')}</span></div><div class="d">${T('chev')}${T('layerpage')}${T('page')}</div></div>
  <div class="pick"><span>${I('arrowg')}</span><select disabled aria-label="活动模型"><option>与曲线相约束来阵列特征.PRT</option></select><span>${I('caretg')}</span></div>
  <div class="list"><div class="rows"><tree-item icon="layers">层</tree-item>
  <tree-item icon="check" arrow="right">01___PRT_ALL_DTM_PLN</tree-item>
  <tree-item icon="flat" arrow="right">01___PRT_DEF_DTM_PLN</tree-item>
  <tree-item icon="check" arrow="leaf">02___PRT_ALL_AXES</tree-item>
  <tree-item icon="check" arrow="right">03___PRT_ALL_CURVES</tree-item>
  <tree-item icon="check" arrow="leaf">04___PRT_ALL_DTM_PNT</tree-item></div>
  <div class="bar"><i><svg width="8" height="6"><path d="M0 5h8L4 1z" fill="#999"/></svg></i></div></div>`);

define('side-panel', `:host{display:flex;flex-direction:column;width:293px;flex:none;background:#f8f9fb;border-right:3px solid #dae0df}`,
  '<model-tree></model-tree><layer-tree></layer-tree>');

define('view-toolbar', `:host{display:flex;align-items:center;height:32px;padding:0 2px;background:#f8f9fb;border:1px solid #9fa5a7}`,
  'vfit vin! vout repaint box saved camera datum vview sect persp anno dynv note! spin!'.split(' ').map(n => T(n.replace('!', ''), 'box' + (n.endsWith('!') ? ' on' : ''))).join(''));

const ball = (x, y, m) => `<g transform="translate(${x} ${y})"><circle cx=".500" cy=".700" r="7.500" fill="#b5b5b5"/><circle r="7.300" fill="#f0f1f3"/>${m}</g>`;
const hbar = '<path d="M-6 .500H6" stroke="#333" stroke-width="1.200"/>';
const vbar = '<path d="M0-6V6" stroke="#333" stroke-width="1.500"/>';
const pin = '<path d="M-6-.500H6" stroke="#555" stroke-width="1.500"/><circle cx="1.500" cy="-.500" r="2.500" fill="#8fd6ee" stroke="#3c8fae"/>';

define('sketch-canvas', `:host{display:block;position:relative;flex:1;min-width:0;background:#fff;overflow:hidden}
  svg{display:block;position:absolute;left:0;top:0}
  view-toolbar{position:absolute;left:326px;top:7px}
  .tab{position:absolute;right:-24px;top:515px;width:32px;height:34px;border-radius:8px;background:linear-gradient(#1552ff,#12a0ff);box-shadow:0 0 6px #c8d8ff}
  .dim{font:300 16px Roboto,"Liberation Sans",sans-serif;fill:#0000d8}
  .name{font:300 16px Roboto,"Liberation Sans",sans-serif;fill:#9a6236}
  .logo{font:300 italic 40px "Noto Sans CJK SC",sans-serif}
  .url{font:italic 15px "DejaVu Sans",sans-serif;fill:#8e8e8e}`,
  `<svg width="983" height="745" viewBox="293 168 983 745">
  <g fill="none" shape-rendering="crispEdges">
    <path d="M634.500 168V913M634 825.500H1276" stroke="#9a6236"/>
    <path d="M648 822.500H1276" stroke="#777"/>
    <path d="M648.500 168V913" stroke="#111"/>
    <path d="M648.500 837V885" stroke="#0000e0"/>
    <path d="M648.500 170V913M306 824.500H1276" stroke="#2ee0e0" stroke-dasharray="23 23"/>
  </g>
  <path d="M907 396h39v429h-39z" fill="#faecbe" stroke="#ff9900" stroke-width="2" shape-rendering="crispEdges"/>
  <path d="M906 824h41" stroke="#ff9900" stroke-width="3"/>
  <g fill="none"><path d="M767 505C805 470 860 424 907 396C990 346 1080 321 1165 321C1205 321 1240 326 1276 334" stroke="#27dbe0"/>
  <path d="M767 505C805 470 860 424 907 396C990 346 1080 321 1165 321C1205 321 1240 326 1276 334" stroke="#1488b8" stroke-dasharray="32 32"/></g>
  <path d="M905 395h3v3h-3zM945 395h3v3h-3zM905 823h3v3h-3zM945 823h3v3h-3z" fill="#2a9bbf"/>
  <g fill="none" stroke="#0000e0" shape-rendering="crispEdges"><path d="M906.500 371V391M946.500 371V391M906 379.500h6M906.500 828V890M648 883.500H760M819 883.500H895"/></g>
  <path d="M650 883.500l11-2v4zM907 379.500l12-2v4z" fill="#0000e0"/>
  <path d="M906 883.500l-12-2.500v5zM945 378.500l-11-2.500v5z" fill="#2ec84e"/>
  <text class="dim" x="903" y="385">10.00</text>
  <text class="dim" x="770" y="890">65.00</text>
  <text class="name" x="634" y="825">FRONT</text>
  ${ball(916, 412, '<g transform="rotate(-35)">' + pin + '</g>')}${ball(938, 414, hbar)}${ball(888, 611, vbar)}${ball(964, 611, vbar)}${ball(923, 842, hbar)}${ball(947, 842, pin)}
  <text class="logo" x="1088" y="883" fill="#ff6330">野火</text><text class="logo" x="1175" y="883" fill="#111">论坛</text>
  <path d="M1159 829q7 12-1 24-5 8-3 14l5 3q15-11 11-25l-3-8q0 7-4 10 4-10-5-18z" fill="#ff6330"/>
  <text class="url" x="1093" y="901">www.proewildfire.cn</text>
  </svg><view-toolbar></view-toolbar><div class="tab"></div>`);

define('mark-up', `:host{display:block;position:absolute;left:0;top:0;pointer-events:none}
  svg{display:block}text{font:700 17px "Noto Sans CJK SC",sans-serif;fill:#f00}`,
  `<svg width="1276" height="913"><path d="M1000 133L901 387" stroke="#f00" stroke-width="2"/><path d="M916 424L844 489" stroke="#f00" stroke-width="2"/>
  <text x="730" y="323">这个点在这根线上可以了</text><text x="781" y="504">矩形的一个点</text><text x="781" y="520">在线上的</text></svg>`);

define('creo-app', `:host{display:flex;flex-direction:column;position:relative;height:100vh;overflow:hidden}
  main{display:flex;flex:1;min-height:0}`,
  '<title-bar></title-bar><menu-bar></menu-bar><creo-ribbon></creo-ribbon><main><side-panel></side-panel><sketch-canvas></sketch-canvas></main><mark-up></mark-up>');
</script>
</body>
</html>
